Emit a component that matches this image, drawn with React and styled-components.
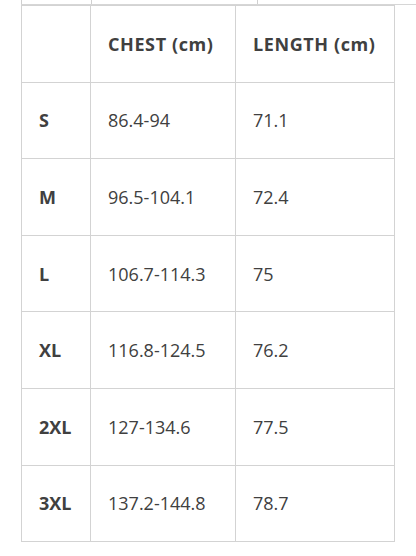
import React from "react";
import styled, { createGlobalStyle } from "styled-components";

const Global = createGlobalStyle`
  html, body { margin: 0; padding: 0; background: #fff; }
  body { font-family: "Open Sans", "Noto Sans", sans-serif; overflow: hidden; }
`;

const Page = styled.div`
  width: 416px;
  height: 556px;
  overflow: hidden;
  background: #fff;
`;

const PrevStrip = styled.div`
  display: flex;
  margin-left: 21px;
  width: 420px;
  height: 4px;
  border-bottom: 1px solid #d6d6d6;
`;

const PrevCell = styled.div`
  flex: 0 0 ${(p) => p.$w}px;
  border-left: 1px solid #d0d0d0;
`;

const Table = styled.table`
  margin-left: 21px;
  width: 373px;
  border-collapse: collapse;
  table-layout: fixed;
  color: #404040;
  border-top: 1px solid #cfcfcf;
`;

const Col = styled.col`
  width: ${(p) => p.$w}px;
`;

const Row = styled.tr`
  height: 76.6px;
`;

const Cell = styled.td`
  border: 1px solid #d3d3d3;
  padding: 0 0 0 17px;
  font-size: 18px;
  font-weight: ${(p) => (p.$bold ? 700 : 400)};
  letter-spacing: ${(p) => (p.$head ? "0.6px" : "0")};
  vertical-align: middle;
  white-space: nowrap;
`;

const rows = [
  ["S", "86.4-94", "71.1"],
  ["M", "96.5-104.1", "72.4"],
  ["L", "106.7-114.3", "75"],
  ["XL", "116.8-124.5", "76.2"],
  ["2XL", "127-134.6", "77.5"],
  ["3XL", "137.2-144.8", "78.7"],
];

export default function App() {
  return (
    <Page>
      <Global />
      <PrevStrip>
        <PrevCell $w={69} />
        <PrevCell $w={165} />
        <PrevCell $w={186} />
      </PrevStrip>
      <Table>
        <colgroup>
          <Col $w={69} />
          <Col $w={145} />
          <Col $w={159} />
        </colgroup>
        <tbody>
          <Row>
            <Cell />
            <Cell $bold $head>CHEST (cm)</Cell>
            <Cell $bold $head>LENGTH (cm)</Cell>
          </Row>
          {rows.map(([s, c, l]) => (
            <Row key={s}>
              <Cell $bold>{s}</Cell>
              <Cell>{c}</Cell>
              <Cell>{l}</Cell>
            </Row>
          ))}
        </tbody>
      </Table>
    </Page>
  );
}
